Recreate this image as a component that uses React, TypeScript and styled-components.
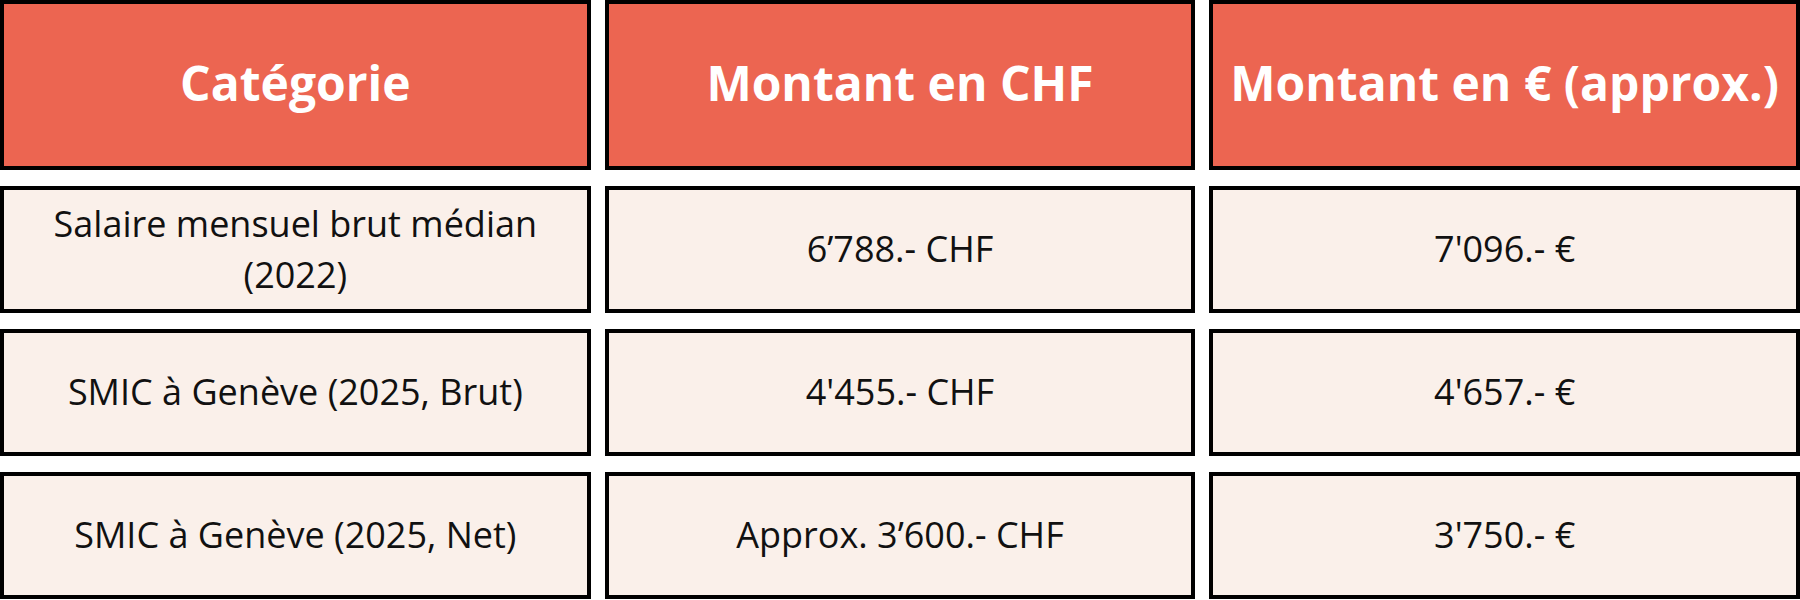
import React from "react";
import styled, { createGlobalStyle } from "styled-components";

const GlobalStyle = createGlobalStyle`
  html, body { margin: 0; padding: 0; background: #ffffff; }
  body { font-family: "Open Sans", "Noto Sans", sans-serif; }
  * { box-sizing: border-box; }
`;

const Table = styled.div`
  display: grid;
  grid-template-columns: repeat(3, 1fr);
  grid-template-rows: 170px repeat(3, 127px);
  column-gap: 14px;
  row-gap: 16px;
  width: 1800px;
`;

const Cell = styled.div<{ $head?: boolean }>`
  display: flex;
  align-items: center;
  justify-content: center;
  text-align: center;
  border: 4px solid #000;
  padding: ${(p) => (p.$head ? "0 16px 4px" : "0 16px")};
  background: ${(p) => (p.$head ? "#EC6551" : "#FAF0EA")};
  color: ${(p) => (p.$head ? "#ffffff" : "#111111")};
  font-family: "Open Sans", "Noto Sans", sans-serif;
  font-weight: ${(p) => (p.$head ? 700 : 400)};
  font-size: ${(p) => (p.$head ? "48px" : "36px")};
  line-height: ${(p) => (p.$head ? "1.2" : "1.4")};
`;

const headers = ["Catégorie", "Montant en CHF", "Montant en € (approx.)"];
const rows = [
  ["Salaire mensuel brut médian (2022)", "6’788.- CHF", "7'096.- €"],
  ["SMIC à Genève (2025, Brut)", "4'455.- CHF", "4'657.- €"],
  ["SMIC à Genève (2025, Net)", "Approx. 3’600.- CHF", "3'750.- €"],
];

export default function App() {
  return (
    <>
      <GlobalStyle />
      <Table>
        {headers.map((h) => (
          <Cell key={h} $head>
            {h}
          </Cell>
        ))}
        {rows.map((r) =>
          r.map((c, i) => <Cell key={r[0] + i}>{c}</Cell>)
        )}
      </Table>
    </>
  );
}
